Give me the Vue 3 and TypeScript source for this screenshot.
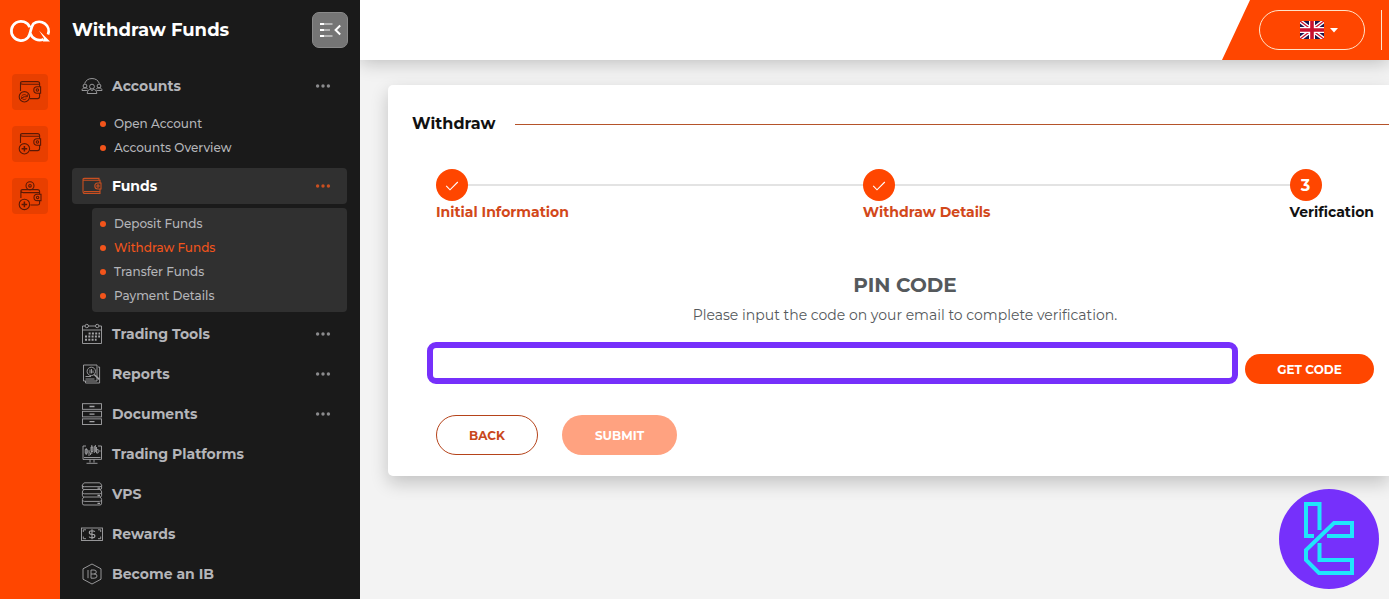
<script setup lang="ts">
import { ref } from 'vue'

interface SubItem {
  label: string
  active?: boolean
}

interface NavItem {
  label: string
  icon: string
  more?: boolean
  active?: boolean
  children?: SubItem[]
}

const nav: NavItem[] = [
  {
    label: 'Accounts',
    icon: 'accounts',
    more: true,
    children: [{ label: 'Open Account' }, { label: 'Accounts Overview' }],
  },
  {
    label: 'Funds',
    icon: 'funds',
    more: true,
    active: true,
    children: [
      { label: 'Deposit Funds' },
      { label: 'Withdraw Funds', active: true },
      { label: 'Transfer Funds' },
      { label: 'Payment Details' },
    ],
  },
  { label: 'Trading Tools', icon: 'tools', more: true },
  { label: 'Reports', icon: 'reports', more: true },
  { label: 'Documents', icon: 'documents', more: true },
  { label: 'Trading Platforms', icon: 'platforms' },
  { label: 'VPS', icon: 'vps' },
  { label: 'Rewards', icon: 'rewards' },
  { label: 'Become an IB', icon: 'ib' },
]

const shortcuts = ['Exchange wallet', 'Add wallet', 'Deposit to wallet']

const steps = [
  { label: 'Initial Information', done: true },
  { label: 'Withdraw Details', done: true },
  { label: 'Verification', done: false },
]

const pin = ref('')
</script>

<template>
  <div class="app">
    <aside class="rail">
      <a class="brand" href="#" aria-label="Home">
        <svg width="42" height="24" viewBox="0 0 42 24" fill="none" stroke="#fff" stroke-width="2.7">
          <path d="M20.8 8.2A9.6 9.6 0 1 0 18.9 18.6C21.8 15.6 21.4 8.4 24.4 4.8A9.4 9.4 0 0 1 39 15.6" />
          <path d="M21.3 14.4A9.6 9.6 0 0 0 34.6 20.2" />
          <path d="M30 11.5 41 22.6H33.8L35 19.2Z" fill="#fff" stroke="none" />
        </svg>
      </a>
      <div class="shortcuts">
        <button v-for="(name, i) in shortcuts" :key="name" type="button" class="shortcut" :aria-label="name">
          <svg width="24" height="24" viewBox="0 0 24 24" fill="none" stroke="#5b1905" stroke-width="1.1">
            <g v-if="i < 2">
              <path d="M2.5 11V3.2Q2.5 1.6 4.2 1.6H19.5Q21.6 1.6 21.6 3.6V6.8M2.6 3.6Q3 4.3 5 4.3H21.4M21.6 13V16.6Q21.6 18.6 19.6 18.6H12" />
              <path d="M22.6 6.8H19A3.2 3.2 0 0 0 19 13.2H22.6Z" />
              <circle cx="19.4" cy="10" r="1.2" />
              <circle cx="6.4" cy="16.8" r="5.2" />
              <path v-if="i === 1" d="M3.6 16.8H9.2M6.4 14V19.6" stroke-width="1.5" />
              <path v-else d="M3.4 16.5C4.5 14 8 14 9 16.4M9.4 14.4V16.7H7.2M3.5 19V17.5H5.6M4.2 18.6C5.2 19.8 7.4 19.8 8.4 18.5M5.2 16.8H7.4" stroke-width="0.9" />
            </g>
            <g v-else>
              <circle cx="12" cy="1.8" r="4" />
              <circle cx="12" cy="1.8" r="1.3" />
              <path d="M2.9 14V7.2Q2.9 5.6 4.6 5.6H19.5Q21.6 5.6 21.6 7.6V10.2M3 7.2Q3.4 8.6 5.2 8.6H21.4M21.6 16.6V19.2Q21.6 21 19.6 21H12.4" />
              <path d="M23 10.2H19.2A3.2 3.2 0 0 0 19.2 16.6H23Z" />
              <circle cx="19.6" cy="13.4" r="1.2" />
              <circle cx="6.4" cy="20.4" r="5.2" />
              <path d="M3.6 20.4H9.2M6.4 17.6V23.2" stroke-width="1.5" />
            </g>
          </svg>
        </button>
      </div>
    </aside>

    <aside class="sidebar">
      <div class="sidebar-head">
        <h1>Withdraw Funds</h1>
        <button type="button" class="collapse" aria-label="Collapse menu">
          <svg width="24" height="18" viewBox="0 0 24 18" fill="none">
            <path d="M2 3H14.5M2 9H12M2 15H14.5" stroke="#c9c9c9" stroke-width="1.6" />
            <path d="M2 3H6M2 9H6M2 15H6" stroke="#fff" stroke-width="1.8" />
            <path d="M22.2 4.5 17.6 9 22.2 13.5" stroke="#fff" stroke-width="2" />
          </svg>
        </button>
      </div>

      <nav class="menu" aria-label="Main">
        <template v-for="item in nav" :key="item.label">
          <a href="#" class="row" :class="{ active: item.active }">
            <svg class="row-icon" width="24" height="24" viewBox="0 0 24 24" fill="none" stroke="currentColor" stroke-width="0.9">
              <g v-if="item.icon === 'accounts'">
                <path d="M4.6 9.5A8 8 0 0 1 19.4 9.5" />
                <circle cx="12" cy="12.6" r="2.4" />
                <path d="M7.2 19.5C7.2 17 8.8 15.6 10.6 15.2L12 16.8 13.4 15.2C15.2 15.6 16.8 17 16.8 19.5Z" />
                <circle cx="5" cy="12" r="1.9" />
                <circle cx="19" cy="12" r="1.9" />
                <path d="M7.6 16.5H2C2 14.8 3 13.9 5 13.9S7.6 14.6 8 15.3M16.4 16.5H22C22 14.8 21 13.9 19 13.9S16.4 14.6 16 15.3" />
              </g>
              <g v-else-if="item.icon === 'funds'" stroke-width="1.1">
                <path d="M20 9V6.2H5Q3 6.2 3 5.2T5 4.4H19V6M3 5V17.4Q3 19.4 5 19.4H20V15M20 17.5H4" />
                <path d="M21 9H17.8A3 3 0 0 0 17.8 15H21Z" />
                <circle cx="18" cy="12" r="1.1" />
              </g>
              <g v-else-if="item.icon === 'tools'">
                <path d="M5 4H2.5V21.5H21.5V4H19M8.5 4H15.5M2.5 8H21.5" />
                <circle cx="6.8" cy="4" r="1.7" />
                <circle cx="17.2" cy="4" r="1.7" />
                <path d="M8.6 11.4H20M5 14.6H20M5 17.8H16.6" stroke-width="2" stroke-dasharray="2 1.3" />
              </g>
              <g v-else-if="item.icon === 'reports'">
                <path d="M17 3H3.5V19H17V3ZM18 5H19.6V21H5.5V19" />
                <circle cx="11.3" cy="9.4" r="4.2" fill="#1a1a1a" />
                <path d="M10 7.5V11.4M11.5 7V11.4M13 8.5V11M5.5 14.5H11M5.5 17H14.5" />
                <path d="M14.2 12.5 19.3 17.4" stroke-width="1.5" />
              </g>
              <g v-else-if="item.icon === 'documents'">
                <rect x="2.5" y="1.7" width="19" height="5.6" />
                <rect x="2.5" y="9.3" width="19" height="5.6" />
                <rect x="2.5" y="16.9" width="19" height="5.6" />
                <path d="M9.5 4.5H14.5M9.5 12.1H14.5M9.5 19.7H14.5" stroke-width="1.3" />
              </g>
              <g v-else-if="item.icon === 'platforms'">
                <path d="M6 4H3V17.4H21.5V4H18M4 15.5H20.5M10 17.5V20.5M14 17.5V20.5M6.5 21.3H17.5" />
                <path d="M6.2 6V13M5.2 7.5H7.3V11.3H5.2ZM9 8V14M9 9.5 10.5 11V13M11.8 3V12M11 5H12.9V9.5H11ZM14.3 4V11M15.4 3V10M16.5 5V11H18.2V7.6H16.5M19 9H20.6" />
              </g>
              <g v-else-if="item.icon === 'vps'">
                <path d="M4 5Q2 5 2.4 3.4L3.2 1.7Q3.6.8 5 .8H19Q20.4.8 20.8 1.7L21.6 3.4V6Q21.6 7.5 20 7.5H4Q2.4 7.5 2.4 6V3.6Q2.8 4.7 4.4 4.7H20Q21.3 4.7 21.6 3.6" />
                <path d="M4 7.7Q2.4 8.3 2.4 10V13.3Q2.4 15 4 15H20Q21.6 15 21.6 13.3V10Q21.6 8.3 20 7.7M2.8 10.7Q3 11.8 4.6 11.8H19.4Q21 11.8 21.2 10.7" />
                <path d="M4 15.2Q2.4 16 2.4 17.5V21.2Q2.4 23 4 23H20Q21.6 23 21.6 21.2V17.5Q21.6 16 20 15.2M2.8 18.4Q3 19.4 4.6 19.4H19.4Q21 19.4 21.2 18.4" />
                <path d="M17.5 6.2H20M17.5 13.5H20M17.5 21.3H20" stroke-width="1.3" />
              </g>
              <g v-else-if="item.icon === 'rewards'">
                <rect x="1.5" y="6" width="21" height="12.5" />
                <path d="M3.3 10V7.8H6M18 7.8H20.7V10M20.7 14.5V16.7H18M6 16.7H3.3V14.5" />
                <path d="M14.8 9.7Q14.2 8.7 12 8.7 9.3 8.7 9.3 10.4T12 12.2Q14.9 12.2 14.9 14T12 15.8Q9.6 15.8 9.1 14.6M12 7.3V17.3" stroke-width="1.1" />
              </g>
              <g v-else>
                <path d="M12 2 21 6.8V17.2L12 22 3 17.2V6.8Z" />
                <path d="M8 8V16.2M11 8V16.2H14.2Q17 16.2 17 14T14.2 12H11M11 8H14Q16.3 8 16.3 10T14 12" />
              </g>
            </svg>
            <span class="row-label">{{ item.label }}</span>
            <svg v-if="item.more" class="dots" width="16" height="4" viewBox="0 0 16 4" fill="currentColor">
              <circle cx="2.6" cy="2" r="1.7" />
              <circle cx="8" cy="2" r="1.7" />
              <circle cx="13.4" cy="2" r="1.7" />
            </svg>
          </a>
          <ul v-if="item.children" class="sub" :class="{ open: item.active }">
            <li v-for="child in item.children" :key="child.label">
              <a href="#" :class="{ current: child.active }">{{ child.label }}</a>
            </li>
          </ul>
        </template>
      </nav>
    </aside>

    <div class="page">
      <header class="topbar">
        <div class="topbar-tools">
          <button type="button" class="language" aria-label="Language: English" aria-haspopup="listbox">
            <svg class="flag" width="24" height="18" viewBox="0 0 24 18">
              <rect width="24" height="18" fill="#1d174f" />
              <path d="M0 0 24 18M24 0 0 18" stroke="#fff" stroke-width="4" />
              <path d="M0 0 24 18M24 0 0 18" stroke="#c8102e" stroke-width="1.3" />
              <path d="M12 0V18M0 9H24" stroke="#fff" stroke-width="6" />
              <path d="M12 0V18M0 9H24" stroke="#c8102e" stroke-width="3.6" />
            </svg>
            <svg width="8" height="5" viewBox="0 0 8 5"><path d="M0 0H8L4 4.6Z" fill="#fff" /></svg>
          </button>
          <span class="divider"></span>
        </div>
      </header>

      <main class="content">
        <section class="card">
          <div class="card-head">
            <h2>Withdraw</h2>
            <span class="rule"></span>
          </div>

          <ol class="steps">
            <li v-for="(step, i) in steps" :key="step.label" class="step" :class="{ done: step.done }">
              <div class="track">
                <span class="bullet">
                  <svg v-if="step.done" width="14" height="12" viewBox="0 0 14 12" fill="none">
                    <path d="M1.2 6.8 5 10.8 12.8 3" stroke="#fff" stroke-width="1.1" />
                  </svg>
                  <template v-else>{{ i + 1 }}</template>
                </span>
              </div>
              <span class="step-label">{{ step.label }}</span>
            </li>
          </ol>

          <form @submit.prevent>
            <div class="intro">
              <label for="pin">PIN CODE</label>
              <p>Please input the code on your email to complete verification.</p>
            </div>
            <div class="code-row">
              <input id="pin" v-model="pin" type="text" autocomplete="one-time-code" />
              <button type="button" class="get-code">GET CODE</button>
            </div>
            <div class="actions">
              <button type="button" class="back">BACK</button>
              <button type="submit" class="submit" disabled>SUBMIT</button>
            </div>
          </form>
        </section>
      </main>
    </div>

    <a class="badge" href="#" aria-label="Support">
      <svg width="100" height="100" viewBox="0 0 100 100" fill="none" stroke="#1fe5fb" stroke-width="4">
        <path d="M35 47H27V15H40.5V41" />
        <path d="M48 47H73V34H55L27 61V71L40 84H73V71H40.5V54" />
      </svg>
    </a>
  </div>
</template>

<style>
body {
  margin: 0;
  background: #f3f3f3;
}
</style>

<style scoped>
.app {
  display: flex;
  min-height: 100vh;
  font-family: Montserrat, Inter, sans-serif;
  color: #111;
}

button,
input {
  font: inherit;
  box-sizing: border-box;
}

button {
  cursor: pointer;
}

a {
  color: inherit;
  text-decoration: none;
}

svg {
  flex: none;
  overflow: visible;
}

h1,
h2,
p,
ul,
ol {
  margin: 0;
  padding: 0;
}

.rail {
  flex: 0 0 60px;
  background: #ff4600;
}

.brand {
  display: flex;
  align-items: center;
  justify-content: center;
  height: 62px;
}

.shortcuts {
  display: flex;
  flex-direction: column;
  align-items: center;
  gap: 16px;
  padding-top: 12px;
}

.shortcut {
  display: flex;
  align-items: center;
  justify-content: center;
  width: 36px;
  height: 36px;
  padding: 0;
  border: 0;
  border-radius: 4px;
  background: #e83f00;
}

.sidebar {
  flex: 0 0 300px;
  background: #1a1a1a;
  color: #b4b5b9;
}

.sidebar-head {
  display: flex;
  align-items: center;
  justify-content: space-between;
  height: 60px;
  padding: 0 12px;
}

h1 {
  font-size: 18px;
  font-weight: 700;
  color: #fff;
}

.collapse {
  display: flex;
  align-items: center;
  justify-content: center;
  width: 36px;
  height: 36px;
  padding: 0;
  border: 1px solid #8a8a8a;
  border-radius: 7px;
  background: #757575;
}

.menu {
  display: flex;
  flex-direction: column;
  gap: 4px;
  padding: 8px 13px 7px 12px;
}

.row {
  display: flex;
  align-items: center;
  gap: 8px;
  height: 36px;
  padding: 0 16px 0 8px;
  border-radius: 4px;
  font-size: 14px;
  font-weight: 700;
}

.row.active {
  background: #303030;
  color: #fff;
}

.row-icon {
  color: #a4a4a6;
}

.row.active .row-icon,
.row.active .dots {
  color: #c94f20;
}

.row-label {
  flex: 1;
}

.dots {
  color: #8b8b8d;
}

.sub {
  margin-left: 20px;
  padding: 4px 0 4px 8px;
  border-radius: 4px;
  list-style: none;
  font-size: 12px;
  font-weight: 500;
  line-height: 24px;
}

.sub.open {
  background: #303030;
}

.sub a {
  display: flex;
  align-items: center;
  gap: 8px;
}

.sub a::before {
  content: '';
  width: 6px;
  height: 6px;
  border-radius: 50%;
  background: #f2541b;
}

.sub .current {
  color: #f2541b;
}

.page {
  flex: 1;
  min-width: 0;
  background: #f3f3f3;
}

.topbar {
  display: flex;
  justify-content: flex-end;
  height: 60px;
  background: #fff;
  box-shadow: 0 2px 18px rgba(0, 0, 0, 0.24);
  clip-path: inset(0 0 -30px 0);
}

.topbar-tools {
  display: flex;
  align-items: center;
  gap: 16px;
  box-sizing: border-box;
  width: 167px;
  padding-left: 37px;
  background: #ff4600;
  clip-path: polygon(28px 0, 100% 0, 100% 100%, 0 100%);
}

.language {
  display: flex;
  align-items: center;
  justify-content: center;
  gap: 6px;
  width: 106px;
  height: 40px;
  padding: 0 0 0 14px;
  border: 1px solid #ffe3c8;
  border-radius: 20px;
  background: transparent;
}

.flag {
  overflow: hidden;
}

.divider {
  width: 1px;
  height: 40px;
  background: #ffe3c8;
}

.content {
  padding: 25px 0 24px 28px;
}

.card {
  padding: 27px 0 21px;
  border-radius: 5px 0 0 5px;
  background: #fff;
  box-shadow: 0 7px 18px rgba(0, 0, 0, 0.2);
}

.card-head {
  display: flex;
  align-items: center;
  gap: 20px;
  padding-left: 24px;
}

h2 {
  font-size: 16px;
  font-weight: 700;
  line-height: 24px;
}

.rule {
  flex: 1;
  height: 1px;
  background: #b5532a;
}

.steps {
  display: flex;
  padding: 33px 15px 0 48px;
  list-style: none;
}

.step {
  flex: 1;
}

.step:last-child {
  flex: 0 0 84px;
}

.track {
  display: flex;
  align-items: center;
}

.step:not(:last-child) .track::after {
  content: '';
  flex: 1;
  height: 2px;
  background: #e3e3e3;
}

.bullet {
  display: flex;
  align-items: center;
  justify-content: center;
  width: 32px;
  height: 32px;
  border-radius: 50%;
  background: #ff4600;
  color: #fff;
  font-size: 16px;
  font-weight: 700;
}

.step-label {
  font-size: 14px;
  font-weight: 700;
  line-height: 22px;
  white-space: nowrap;
}

.done .step-label {
  color: #d2481a;
}

.intro {
  padding: 48px 15px 0 48px;
  text-align: center;
  color: #55595c;
}

.intro label {
  display: block;
  font-size: 20px;
  font-weight: 700;
  line-height: 28px;
}

.intro p {
  margin-top: 4px;
  font-size: 14px;
  line-height: 24px;
}

.code-row {
  display: flex;
  align-items: flex-end;
  gap: 7px;
  padding: 15px 15px 0 39px;
}

.code-row input {
  flex: 1;
  min-width: 0;
  height: 42px;
  padding: 0 12px;
  border: 6px solid #7630fb;
  border-radius: 9px;
  background: #fff;
  font-size: 14px;
  outline: 0;
}

.get-code,
.actions button {
  border: 0;
  border-radius: 20px;
  font-size: 12px;
  font-weight: 700;
}

.get-code {
  width: 129px;
  height: 30px;
  background: #ff4600;
  color: #fff;
}

.actions {
  display: flex;
  gap: 24px;
  padding: 31px 15px 0 48px;
}

.actions button {
  height: 40px;
  padding: 0 32px;
}

.actions .back {
  min-width: 102px;
  border: 1px solid #b5431a;
  background: #fff;
  color: #c9471b;
}

.actions .submit {
  min-width: 115px;
  background: #ffa280;
  color: #fff;
}

.badge {
  position: fixed;
  right: 10px;
  bottom: 10px;
  width: 100px;
  height: 100px;
  border-radius: 50%;
  background: #7630fb;
}
</style>
